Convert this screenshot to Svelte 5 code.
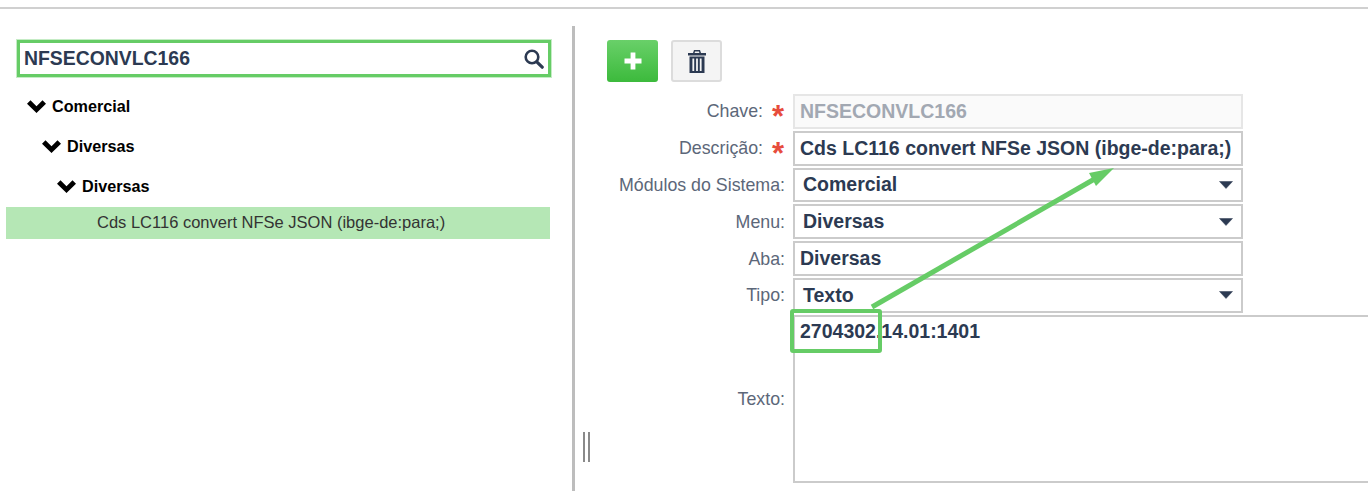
<script>
  const fields = [
    { label: 'Chave:', value: 'NFSECONVLC166', required: true, disabled: true },
    { label: 'Descrição:', value: 'Cds LC116 convert NFSe JSON (ibge-de:para;)', required: true },
    { label: 'Módulos do Sistema:', value: 'Comercial', select: true },
    { label: 'Menu:', value: 'Diversas', select: true },
    { label: 'Aba:', value: 'Diversas' },
    { label: 'Tipo:', value: 'Texto', select: true }
  ];

  const tree = [
    { name: 'Comercial', level: 0 },
    { name: 'Diversas', level: 1 },
    { name: 'Diversas', level: 2 }
  ];
</script>

<div class="page">
  <div class="panes">
    <aside class="left">
      <div class="search">
        <span class="search-text">NFSECONVLC166</span>
        <svg class="search-icon" width="20" height="20" viewBox="0 0 20 20" aria-hidden="true">
          <circle cx="8" cy="8" r="6.3" fill="none" stroke="#2c3a52" stroke-width="2.6" />
          <path d="M12.8 12.8 L18.2 18.2" stroke="#2c3a52" stroke-width="3.2" stroke-linecap="round" />
        </svg>
      </div>

      <ul class="tree">
        {#each tree as node}
          <li class="node level-{node.level}">
            <svg class="chevron" width="19" height="13" viewBox="0 0 19 13" aria-hidden="true">
              <path d="M0 3.8 L3.5 0.3 L9.5 6.2 L15.5 0.3 L19 3.8 L9.5 13 Z" fill="#000" />
            </svg>
            {node.name}
          </li>
        {/each}
      </ul>
      <div class="selected">Cds LC116 convert NFSe JSON (ibge-de:para;)</div>
    </aside>

    <div class="splitter"></div>

    <main class="right">
      <div class="toolbar">
        <button class="btn add" aria-label="Adicionar">
          <svg width="18" height="18" viewBox="0 0 18 18" aria-hidden="true">
            <path d="M6.6 0.5 H11.4 V6.6 H17.5 V11.4 H11.4 V17.5 H6.6 V11.4 H0.5 V6.6 H6.6 Z" fill="#fff" />
          </svg>
        </button>
        <button class="btn remove" aria-label="Excluir">
          <svg width="18" height="23" viewBox="0 0 18 23" aria-hidden="true">
            <path fill="#2c3a52" fill-rule="evenodd" d="M6 0 H12 L13 3 H18 V5.5 H0 V3 H5 Z M7 1.6 L6.6 3 H11.4 L11 1.6 Z M1.5 6.5 H16.5 V23 H1.5 Z M4.4 8.5 V21 H6.2 V8.5 Z M8.1 8.5 V21 H9.9 V8.5 Z M11.8 8.5 V21 H13.6 V8.5 Z" />
          </svg>
        </button>
      </div>

      <div class="form">
        {#each fields as field}
          <div class="label">
            <span class="label-text">{field.label}</span>
            {#if field.required}<span class="star">*</span>{/if}
          </div>
          <div class="input" class:disabled={field.disabled} class:select={field.select}>
            <span>{field.value}</span>
            {#if field.select}
              <svg class="caret" width="14" height="8" viewBox="0 0 14 8" aria-hidden="true">
                <path d="M0.5 0.5 H13.5 L7 7.5 Z" fill="#2c3a52" stroke="#2c3a52" stroke-width="0.5" stroke-linejoin="round" />
              </svg>
            {/if}
          </div>
        {/each}
        <div class="label text-label"><span class="label-text">Texto:</span></div>
        <div class="textarea">2704302.14.01:1401</div>
      </div>
    </main>
  </div>

  <div class="grip"></div>
  <div class="highlight"></div>
  <svg class="arrow" width="1368" height="491" viewBox="0 0 1368 491" aria-hidden="true">
    <path d="M872 307 L1098 177" stroke="#66cc66" stroke-width="5" fill="none" />
    <path d="M1114 168 L1089 173 L1096 186 Z" fill="#66cc66" />
  </svg>
</div>

<style>
  :global(body) {
    margin: 0;
    background: #fff;
    font-family: "Liberation Sans", Arial, sans-serif;
    overflow: hidden;
  }

  .page {
    position: relative;
    height: 491px;
    overflow: hidden;
    padding-top: 7px;
    box-sizing: border-box;
  }

  .panes {
    display: flex;
    height: 482px;
    border-top: 2px solid #d0d0d0;
  }

  .left {
    width: 572px;
    flex: none;
    box-sizing: border-box;
    padding: 31px 22px 0 6px;
  }

  .search {
    display: flex;
    align-items: center;
    justify-content: space-between;
    box-sizing: border-box;
    height: 37px;
    margin: 0 -1px 0 11px;
    padding: 0 4px;
    border: 3px solid #66cc66;
    box-shadow: 0 0 0 1px #c5ecc5;
    color: #2c3a52;
    font-size: 19.4px;
    font-weight: bold;
  }

  .tree {
    list-style: none;
    margin: 9px 0 0;
    padding: 0;
  }

  .node {
    display: flex;
    align-items: center;
    gap: 6px;
    height: 40px;
    font-size: 16.2px;
    font-weight: bold;
    color: #000;
  }

  .level-0 { padding-left: 21px; }
  .level-1 { padding-left: 36px; }
  .level-2 { padding-left: 51px; }

  .selected {
    height: 32px;
    margin-top: 1px;
    padding-left: 91px;
    background: #b5e7b5;
    color: #333;
    font-size: 16.5px;
    line-height: 31px;
  }

  .splitter {
    width: 3px;
    flex: none;
    margin-top: 17px;
    background: #bdbdbd;
  }

  .right {
    flex: 1;
    min-width: 0;
    padding: 31px 0 0 32px;
  }

  .toolbar {
    display: flex;
    gap: 13px;
    margin-bottom: 12px;
  }

  .btn {
    display: flex;
    align-items: center;
    justify-content: center;
    width: 51px;
    height: 42px;
    padding: 0;
    border-radius: 3px;
    cursor: pointer;
  }

  .add {
    border: none;
    background: linear-gradient(#69d069, #3cba3c);
  }

  .remove {
    border: 2px solid #dcdcdc;
    background: #f4f4f4;
  }

  .form {
    display: grid;
    grid-template-columns: 186px 1fr;
    grid-auto-rows: 34.8px;
    row-gap: 2px;
  }

  .label {
    display: flex;
    align-items: center;
    justify-content: flex-end;
    gap: 9px;
    padding: 1px 8px 0 0;
    color: #5c6779;
    font-size: 17.8px;
  }

  .star {
    color: #e74c3c;
    font-size: 31px;
    font-weight: bold;
    line-height: 16px;
    padding-top: 11px;
    width: 13px;
  }

  .input {
    display: flex;
    align-items: center;
    justify-content: space-between;
    box-sizing: border-box;
    width: 450px;
    padding: 0 8px 0 5px;
    border: 2px solid #cbcbcb;
    color: #2c3a52;
    font-size: 19.5px;
    font-weight: bold;
  }

  .input.select {
    padding-left: 8px;
  }

  .input.disabled {
    border-color: #e6e6e6;
    background: #fafafa;
    color: #a2a8b2;
  }

  .caret {
    flex: none;
  }

  .text-label {
    height: 167px;
  }

  .textarea {
    box-sizing: border-box;
    height: 168px;
    margin-right: -4px;
    padding: 3px 5px;
    border: 2px solid #cbcbcb;
    color: #2c3a52;
    font-size: 19.5px;
    font-weight: bold;
    line-height: 23px;
  }

  .grip {
    position: absolute;
    left: 583px;
    top: 432px;
    width: 2px;
    height: 30px;
    background: #8a8a8a;
    box-shadow: 5px 0 0 #8a8a8a;
  }

  .highlight {
    position: absolute;
    left: 790px;
    top: 309px;
    box-sizing: border-box;
    width: 92px;
    height: 44px;
    border: 4.5px solid #66cc66;
    border-radius: 3px;
  }

  .arrow {
    position: absolute;
    left: 0;
    top: 0;
    pointer-events: none;
  }
</style>
